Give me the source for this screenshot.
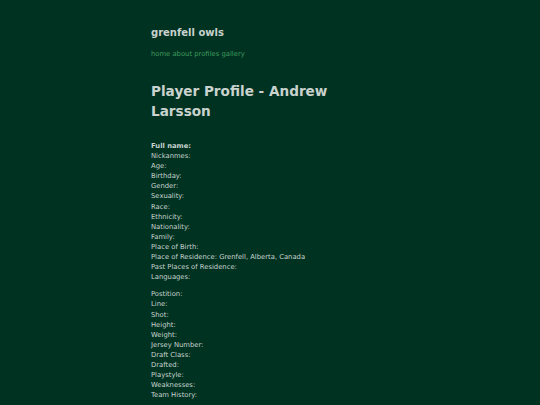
import React from 'react';

const basics = [
  ['Nickanmes:', ''],
  ['Age:', ''],
  ['Birthday:', ''],
  ['Gender:', ''],
  ['Sexuality:', ''],
  ['Race:', ''],
  ['Ethnicity:', ''],
  ['Nationality:', ''],
  ['Family:', ''],
  ['Place of Birth:', ''],
  ['Place of Residence:', 'Grenfell, Alberta, Canada'],
  ['Past Places of Residence:', ''],
  ['Languages:', ''],
];

const hockey = [
  'Postition:',
  'Line:',
  'Shot:',
  'Height:',
  'Weight:',
  'Jersey Number:',
  'Draft Class:',
  'Drafted:',
  'Playstyle:',
  'Weaknesses:',
  'Team History:',
];

export default function App() {
  return (
    <div className="min-h-[405px] bg-[#003222] text-[#c9d2cd]" style={{ fontFamily: '"DejaVu Sans", Verdana, sans-serif' }}>
      <div className="w-[238px] mx-auto pt-[25px]">
        <h1 className="text-[10px] font-bold leading-[16px]">grenfell owls</h1>
        <nav className="mt-[8px] text-[6.8px] leading-[10px] text-[#3f9a5c]">
          <a>home</a> <a>about</a> <a>profiles</a> <a>gallery</a>
        </nav>
        <h2 className="mt-[22px] text-[13.6px] font-bold leading-[20px]">Player Profile - Andrew Larsson</h2>
        <div className="mt-[20px] text-[6.8px] leading-[10.1px]">
          <p className="font-bold">Full name:</p>
          {basics.map(([k, v]) => (
            <p key={k}>{k}{v ? ' ' + v : ''}</p>
          ))}
        </div>
        <div className="mt-[7px] text-[6.8px] leading-[10.1px]">
          {hockey.map(k => (
            <p key={k}>{k}</p>
          ))}
        </div>
      </div>
    </div>
  );
}
